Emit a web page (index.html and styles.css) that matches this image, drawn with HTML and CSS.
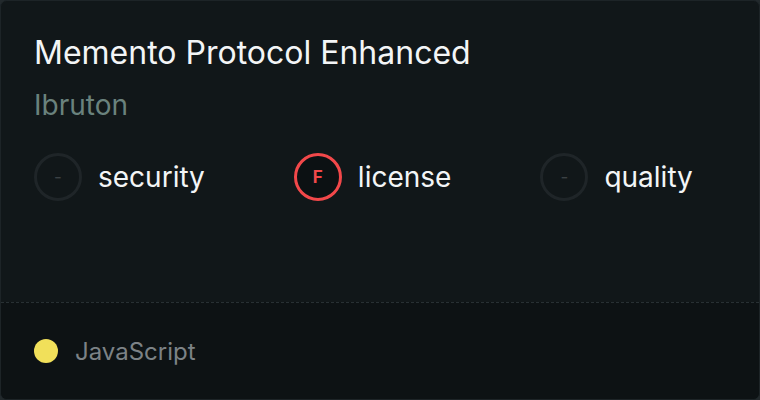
FILE: index.html
```html
<!DOCTYPE html>
<html lang="en">
<head>
    <meta charset="UTF-8">
    <title>Memento Protocol Enhanced</title>
<link rel="stylesheet" href="styles.css">
</head>
<body>
<div class="card">
    <div class="top-cont">
        <h1 class="title">Memento Protocol Enhanced</h1>
        <p class="owner">Ibruton</p>
        <div class="scores">
            <div class="score">
                <span class="grade none">-</span>
                <span class="label">security</span>
            </div>
            <div class="score">
                <span class="grade fail">F</span>
                <span class="label">license</span>
            </div>
            <div class="score">
                <span class="grade none">-</span>
                <span class="label">quality</span>
            </div>
        </div>
    </div>
    <div class="bottom-cont">
        <span class="lang-dot"></span>
        <span class="lang">JavaScript</span>
    </div>
</div>
</body>
</html>
```

FILE: styles.css
```css
html, body {margin: 0; height: 100%;}
body {background-color: #22292c; font-family: 'Inter', 'Noto Sans', sans-serif;}
.card {display: flex; flex-direction: column; box-sizing: border-box; height: 400px; border: 1px solid #1d2427; border-radius: 7px; overflow: hidden; background: #111719;}
.top-cont {flex: 1; padding: 32px 33px 0;}
.title {margin: 0; font-size: 32px; font-weight: 400; line-height: 40px; color: #f3f5f6;}
.owner {margin: 15px 0 0; font-size: 28px; line-height: 34px; color: #6a827d;}
.scores {display: flex; gap: 89px; margin-top: 31px;}
.score {display: flex; align-items: center; gap: 16px;}
.grade {display: flex; align-items: center; justify-content: center; box-sizing: border-box; width: 48px; height: 48px; border: 3px solid #1f2528; border-radius: 50%; font-size: 17px; color: #3b4144;}
.grade.fail {border-color: #f2484a; color: #f2484a; background: #0c1113; font-weight: 700;}
.label {font-size: 28px; color: #f3f5f6;}
.bottom-cont {display: flex; align-items: center; gap: 17px; height: 96px; padding: 0 33px; border-top: 1px dashed #283033; background: #0d1214;}
.lang-dot {width: 24px; height: 24px; border-radius: 50%; background: #f1e05a;}
.lang {font-size: 24px; color: #7c8286;}
```
